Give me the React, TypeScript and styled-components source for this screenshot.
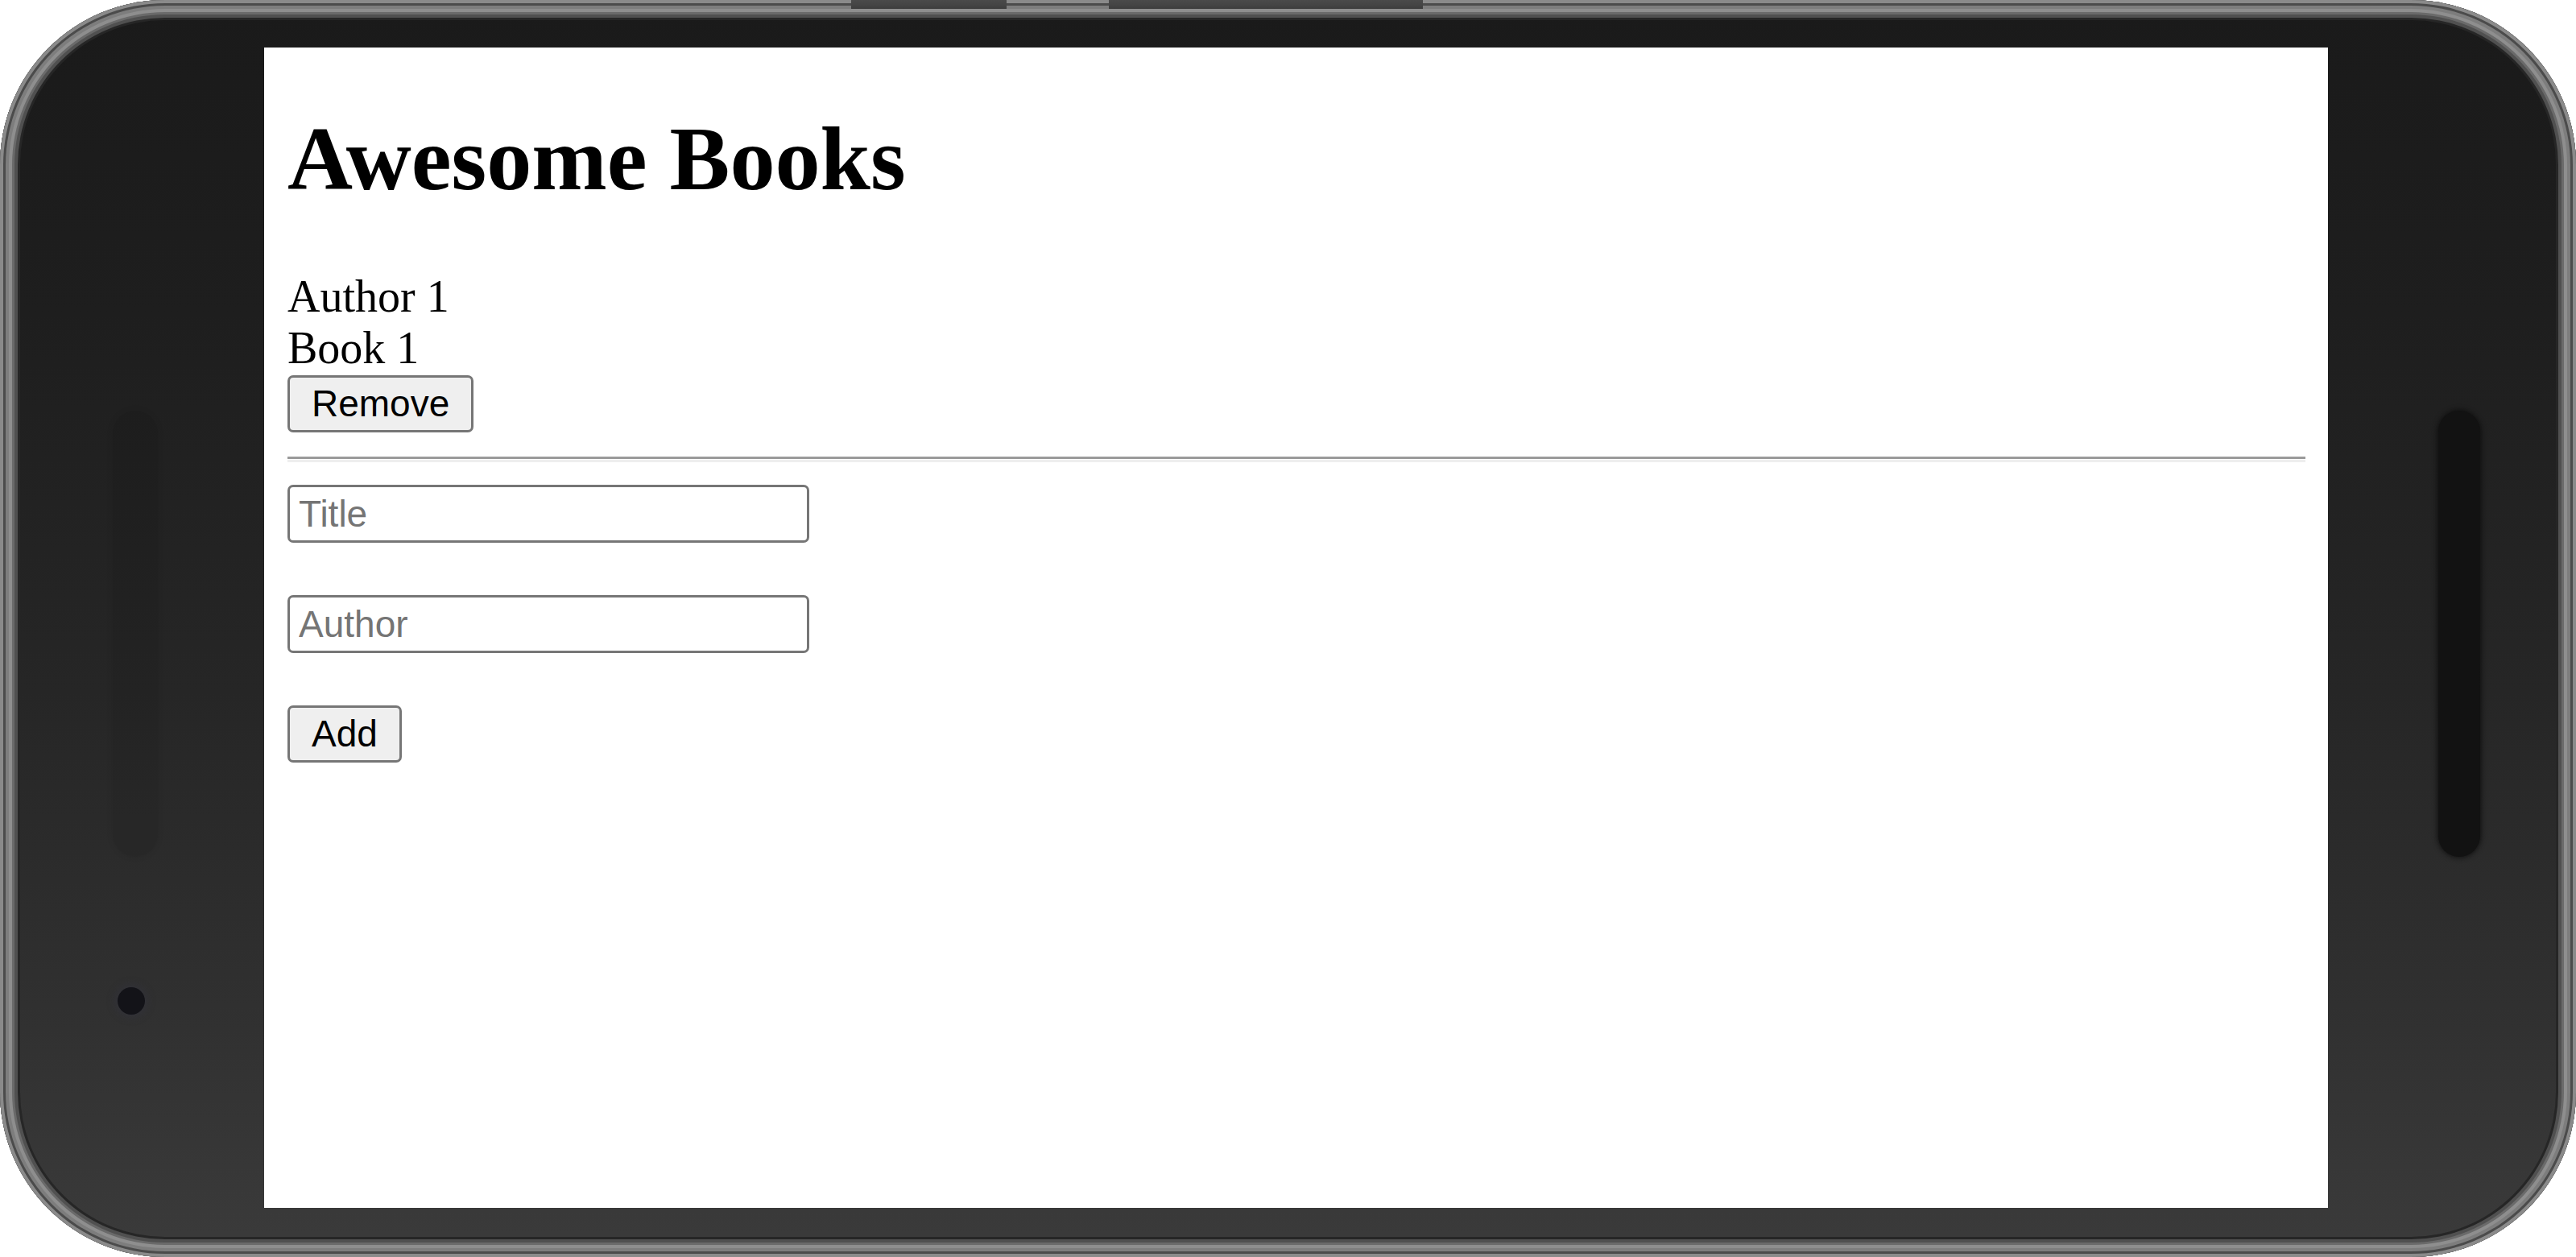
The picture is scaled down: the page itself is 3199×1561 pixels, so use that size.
import React from "react";
import styled, { createGlobalStyle } from "styled-components";

const Global = createGlobalStyle`
  html, body {
    margin: 0;
    padding: 0;
    background: #ffffff;
  }
  body {
    width: 3199px;
    height: 1561px;
    overflow: hidden;
  }
`;

const Phone = styled.div`
  position: relative;
  box-sizing: border-box;
  width: 3199px;
  height: 1561px;
  border-radius: 205px;
  background: linear-gradient(180deg, #1a1a1a 0%, #1e1e1e 25%, #262626 55%, #303030 80%, #3b3b3b 100%);
  box-shadow:
    inset 0 0 0 4px #8a8a8a,
    inset 0 0 0 7px #4b4b4b,
    inset 0 0 0 11px #7d7d7d,
    inset 0 0 0 15px #8e8e8e,
    inset 0 0 0 18px #6a6a6a,
    inset 0 0 0 22px #505050,
    inset 0 0 0 25px #262626;
  display: flex;
  padding: 59px 308px 61px 328px;
`;

const TopKey = styled.span<{ $left: number; $width: number }>`
  position: absolute;
  top: 0;
  left: ${(p) => p.$left}px;
  width: ${(p) => p.$width}px;
  height: 11px;
  background: linear-gradient(180deg, #4a4a4a 0%, #444444 60%, #3c3c3c 100%);
`;

const SideSlot = styled.span<{ $left: number; $width: number; $dark?: boolean }>`
  position: absolute;
  top: 510px;
  left: ${(p) => p.$left}px;
  width: ${(p) => p.$width}px;
  height: 554px;
  border-radius: ${(p) => p.$width / 2}px;
  background: ${(p) => (p.$dark ? "#121212" : "rgba(0, 0, 0, 0.07)")};
  box-shadow: ${(p) => (p.$dark ? "0 0 6px 1px rgba(10,10,10,0.8)" : "0 0 8px rgba(0,0,0,0.08)")};
`;

const Camera = styled.span`
  position: absolute;
  left: 146px;
  top: 1226px;
  width: 34px;
  height: 34px;
  border-radius: 50%;
  background: #131318;
  box-shadow: 0 0 10px 4px rgba(50, 50, 64, 0.45);
`;

const Screen = styled.main`
  flex: 1;
  box-sizing: border-box;
  background: #ffffff;
  padding: 75px 28px 0 29px;
  display: flex;
  flex-direction: column;
  align-items: stretch;
  color: #000000;
`;

const Heading = styled.h1`
  margin: 0 0 75px 0;
  font-family: "Liberation Serif", "Times New Roman", serif;
  font-weight: 700;
  font-size: 112.2px;
  line-height: 127px;
`;

const BookList = styled.section`
  display: flex;
  flex-direction: column;
`;

const BookItem = styled.article`
  display: flex;
  flex-direction: column;
  align-items: flex-start;
`;

const BookLine = styled.p`
  margin: 0;
  font-family: "Liberation Serif", "Times New Roman", serif;
  font-size: 56px;
  line-height: 64px;
`;

const Button = styled.button<{ $top?: number }>`
  box-sizing: border-box;
  margin: ${(p) => p.$top ?? 0}px 0 0 0;
  height: 71px;
  padding: 0 27px;
  font-family: "Liberation Sans", Arial, sans-serif;
  font-size: 46px;
  line-height: 53px;
  color: #000000;
  background: #efefef;
  border: 3.5px solid #767676;
  border-radius: 7px;
  align-self: flex-start;
`;

const Divider = styled.hr`
  box-sizing: border-box;
  margin: 30px 0 0 0;
  height: 7px;
  border: none;
  border-top: 3.5px solid #9a9a9a;
  border-bottom: 3.5px solid #eeeeee;
`;

const Form = styled.form`
  margin-top: 28px;
  display: flex;
  flex-direction: column;
  align-items: flex-start;
  gap: 65px;
`;

const Field = styled.input`
  box-sizing: border-box;
  width: 648px;
  height: 72px;
  margin: 0;
  padding: 0 11px;
  border: 3.5px solid #767676;
  border-radius: 7px;
  background: #ffffff;
  font-family: "Liberation Sans", Arial, sans-serif;
  font-size: 46px;
  color: #000000;
  outline: none;
  &::placeholder {
    color: #757575;
  }
`;

export default function App() {
  return (
    <>
      <Global />
      <Phone>
        <TopKey $left={1057} $width={193} />
        <TopKey $left={1377} $width={390} />
        <SideSlot $left={140} $width={56} />
        <SideSlot $left={3028} $width={52} $dark />
        <Camera />
        <Screen>
          <Heading>Awesome Books</Heading>
          <BookList>
            <BookItem>
              <BookLine>Author 1</BookLine>
              <BookLine>Book 1</BookLine>
              <Button type="button" $top={2}>
                Remove
              </Button>
            </BookItem>
          </BookList>
          <Divider />
          <Form onSubmit={(e) => e.preventDefault()}>
            <Field type="text" placeholder="Title" />
            <Field type="text" placeholder="Author" />
            <Button type="submit">Add</Button>
          </Form>
        </Screen>
      </Phone>
    </>
  );
}
